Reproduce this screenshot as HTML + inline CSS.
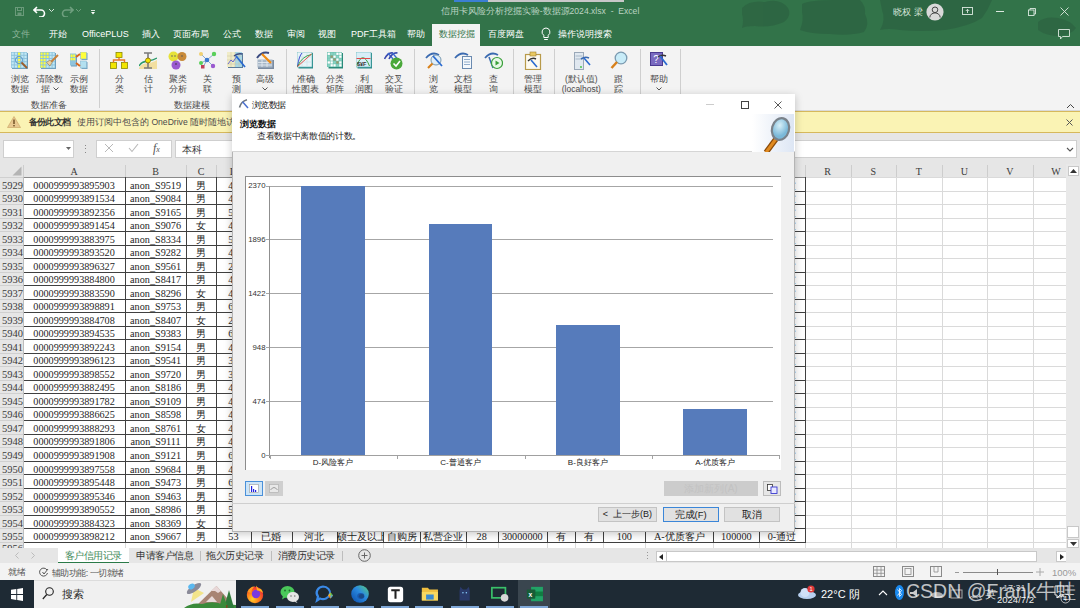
<!DOCTYPE html>
<html><head><meta charset="utf-8"><style>
html,body{margin:0;padding:0;width:1080px;height:608px;overflow:hidden;background:#fff;}
body{position:relative;font-family:"Liberation Sans",sans-serif;font-size:11px;color:#222;}
div{position:absolute;box-sizing:border-box;}
.t{white-space:nowrap;line-height:13px;}
.cell{white-space:nowrap;font-family:"Liberation Serif",serif;font-size:10.2px;line-height:13px;color:#1e1e1e;}
.sf{font-family:"Liberation Serif",serif;}
.rb{white-space:nowrap;font-size:8.5px;line-height:10px;color:#4a4a4a;text-align:center;}
.tab{white-space:nowrap;font-size:9px;line-height:13px;color:#fff;}
</style></head><body>

<div style="left:0px;top:0px;width:1080px;height:46px;background:#327349;"></div>
<svg style="position:absolute;left:720px;top:0px" width="360" height="46" viewBox="0 0 360 46"><g fill="#2d6442" opacity="0.8"><path d="M22 8 Q30 0 45 2 Q60 -2 68 8 Q72 16 64 22 Q50 28 35 26 Q25 26 22 28 Q24 20 22 14 Z"/><path d="M82 4 Q90 0 115 0 H140 Q146 6 145 14 Q150 24 144 32 Q130 36 110 34 Q90 34 80 30 Q84 20 82 12 Z"/><path d="M160 0 H272 Q268 10 262 18 Q250 26 225 30 Q200 32 180 30 Q168 28 160 30 Q166 20 162 10 Z"/><path d="M318 22 Q325 16 338 18 Q350 20 356 28 Q352 34 340 36 Q326 36 318 30 Z"/></g></svg>
<div style="left:454px;top:0px;width:34px;height:2px;background:#3b7fd3;"></div>
<div style="left:488px;top:0px;width:136px;height:2px;background:#c8c8c8;"></div>
<svg style="position:absolute;left:15px;top:7px" width="9" height="9" viewBox="0 0 9 9"><rect x="0.5" y="0.5" width="8" height="8" fill="none" stroke="#6a9a7a" stroke-width="1"/><rect x="2.5" y="0.5" width="4" height="3" fill="none" stroke="#6a9a7a"/><rect x="2.5" y="5.5" width="4" height="3" fill="#6a9a7a"/></svg>
<svg style="position:absolute;left:33px;top:5px" width="14" height="12" viewBox="0 0 14 12"><path d="M4 2 L1 5 L4 8 M1.5 5 H8 a3.5 3.5 0 0 1 0 7 H6" fill="none" stroke="#fff" stroke-width="1.6"/></svg>
<svg style="position:absolute;left:48px;top:8px" width="7" height="5" viewBox="0 0 7 5"><path d="M1 1 L3.5 3.5 L6 1" fill="none" stroke="#d8e6dc" stroke-width="1"/></svg>
<svg style="position:absolute;left:60px;top:5px" width="14" height="12" viewBox="0 0 14 12"><path d="M10 2 L13 5 L10 8 M12.5 5 H6 a3.5 3.5 0 0 0 0 7 H8" fill="none" stroke="#6f9f7f" stroke-width="1.6"/></svg>
<svg style="position:absolute;left:75px;top:8px" width="7" height="5" viewBox="0 0 7 5"><path d="M1 1 L3.5 3.5 L6 1" fill="none" stroke="#6f9f7f" stroke-width="1"/></svg>
<svg style="position:absolute;left:91px;top:10px" width="4" height="5" viewBox="0 0 4 5"><rect x="0" y="0" width="4" height="0.8" fill="#fff"/><path d="M0 2 H4 L2 4.5 Z" fill="#fff"/></svg>
<div class="t" style="left:340px;width:400px;top:5px;text-align:center;color:#bcd3c3;font-size:8.6px;">信用卡风险分析挖掘实验-数据源2024.xlsx&nbsp; - &nbsp;Excel</div>
<div class="t" style="left:893px;top:5.5px;color:#d5e4da;font-size:9px;">晓权 梁</div>
<svg style="position:absolute;left:926px;top:3px" width="18" height="18" viewBox="0 0 18 18"><circle cx="9" cy="9" r="8.6" fill="#d9d9d9"/><circle cx="9" cy="6.8" r="2.8" fill="none" stroke="#444" stroke-width="1"/><path d="M3.8 14.5 a5.2 4.6 0 0 1 10.4 0" fill="none" stroke="#444" stroke-width="1"/></svg>
<svg style="position:absolute;left:962px;top:7px" width="11" height="9" viewBox="0 0 11 9"><rect x="0.5" y="0.5" width="10" height="7" fill="none" stroke="#dce9e0" stroke-width="0.9"/><path d="M5.5 6 V2.5 M3.8 4 L5.5 2.3 L7.2 4" fill="none" stroke="#dce9e0" stroke-width="0.9"/></svg>
<div style="left:996px;top:11px;width:8px;height:0.9px;background:#dce9e0;"></div>
<svg style="position:absolute;left:1027.5px;top:7.5px" width="8" height="8" viewBox="0 0 8 8"><rect x="0.5" y="2" width="5.5" height="5.5" fill="none" stroke="#dce9e0" stroke-width="0.9"/><path d="M2 2 V0.5 H7.5 V6 H6" fill="none" stroke="#dce9e0" stroke-width="0.9"/></svg>
<svg style="position:absolute;left:1059.5px;top:7px" width="9" height="9" viewBox="0 0 9 9"><path d="M0.5 0.5 L8.5 8.5 M8.5 0.5 L0.5 8.5" stroke="#dce9e0" stroke-width="0.9"/></svg>
<svg style="position:absolute;left:1058px;top:29px" width="12" height="11" viewBox="0 0 12 11"><path d="M0.5 0.5 H11.5 V7.5 H4.5 L2.5 10 V7.5 H0.5 Z" fill="none" stroke="#dce9e0" stroke-width="0.9"/></svg>
<div class="tab" style="left:12px;top:28px;color:#8fb59b;">文件</div>
<div class="tab" style="left:49px;top:28px;color:#fff;">开始</div>
<div class="tab" style="left:82px;top:28px;color:#fff;">OfficePLUS</div>
<div class="tab" style="left:142px;top:28px;color:#fff;">插入</div>
<div class="tab" style="left:173px;top:28px;color:#fff;">页面布局</div>
<div class="tab" style="left:223px;top:28px;color:#fff;">公式</div>
<div class="tab" style="left:255px;top:28px;color:#fff;">数据</div>
<div class="tab" style="left:287px;top:28px;color:#fff;">审阅</div>
<div class="tab" style="left:318px;top:28px;color:#fff;">视图</div>
<div class="tab" style="left:351px;top:28px;color:#fff;">PDF工具箱</div>
<div class="tab" style="left:407px;top:28px;color:#fff;">帮助</div>
<div class="tab" style="left:488px;top:28px;color:#fff;">百度网盘</div>
<div class="tab" style="left:558px;top:28px;color:#fff;">操作说明搜索</div>
<div style="left:432px;top:24px;width:48px;height:22px;background:#f3f3f3;"></div>
<div class="tab" style="left:439px;top:28px;color:#327349;">数据挖掘</div>
<svg style="position:absolute;left:541px;top:27px" width="10" height="15" viewBox="0 0 10 15"><path d="M5 1 a4 4 0 0 0 -2.2 7.3 V10.5 H7.2 V8.3 A4 4 0 0 0 5 1 Z M3.2 12.5 H6.8" fill="none" stroke="#fff" stroke-width="1"/></svg>
<div style="left:0px;top:46px;width:1080px;height:65px;background:#f3f3f3;border-bottom:1px solid #d9d9d9;"></div>
<div style="left:98.5px;top:49px;width:1px;height:59px;background:#cfcfcf;"></div>
<div style="left:285.6px;top:49px;width:1px;height:59px;background:#cfcfcf;"></div>
<div style="left:413.5px;top:49px;width:1px;height:59px;background:#cfcfcf;"></div>
<div style="left:512.7px;top:49px;width:1px;height:59px;background:#cfcfcf;"></div>
<div style="left:553.7px;top:49px;width:1px;height:59px;background:#cfcfcf;"></div>
<div style="left:640px;top:49px;width:1px;height:59px;background:#cfcfcf;"></div>
<div style="left:679.6px;top:49px;width:1px;height:59px;background:#cfcfcf;"></div>
<svg style="position:absolute;left:11px;top:52px" width="18" height="18" viewBox="0 0 18 18"><rect x="1" y="1" width="16" height="16" fill="#6f9fbf"/><rect x="0" y="0" width="16" height="16" fill="#8fc3dc"/><rect x="0.60" y="0.60" width="2.20" height="2.20" fill="#c2e8f6"/><rect x="0.60" y="3.80" width="2.20" height="2.20" fill="#c2e8f6"/><rect x="0.60" y="7.00" width="2.20" height="2.20" fill="#c2e8f6"/><rect x="0.60" y="10.20" width="2.20" height="2.20" fill="#c2e8f6"/><rect x="0.60" y="13.40" width="2.20" height="2.20" fill="#c2e8f6"/><rect x="3.80" y="0.60" width="2.20" height="2.20" fill="#c2e8f6"/><rect x="3.80" y="3.80" width="2.20" height="2.20" fill="#c2e8f6"/><rect x="3.80" y="7.00" width="2.20" height="2.20" fill="#c2e8f6"/><rect x="3.80" y="10.20" width="2.20" height="2.20" fill="#c2e8f6"/><rect x="3.80" y="13.40" width="2.20" height="2.20" fill="#c2e8f6"/><rect x="7.00" y="0.60" width="2.20" height="2.20" fill="#ffff3a"/><rect x="7.00" y="3.80" width="2.20" height="2.20" fill="#ffff3a"/><rect x="7.00" y="7.00" width="2.20" height="2.20" fill="#ffff3a"/><rect x="7.00" y="10.20" width="2.20" height="2.20" fill="#ffff3a"/><rect x="7.00" y="13.40" width="2.20" height="2.20" fill="#ffff3a"/><rect x="10.20" y="0.60" width="2.20" height="2.20" fill="#c2e8f6"/><rect x="10.20" y="3.80" width="2.20" height="2.20" fill="#c2e8f6"/><rect x="10.20" y="7.00" width="2.20" height="2.20" fill="#c2e8f6"/><rect x="10.20" y="10.20" width="2.20" height="2.20" fill="#c2e8f6"/><rect x="10.20" y="13.40" width="2.20" height="2.20" fill="#c2e8f6"/><rect x="13.40" y="0.60" width="2.20" height="2.20" fill="#c2e8f6"/><rect x="13.40" y="3.80" width="2.20" height="2.20" fill="#c2e8f6"/><rect x="13.40" y="7.00" width="2.20" height="2.20" fill="#c2e8f6"/><rect x="13.40" y="10.20" width="2.20" height="2.20" fill="#c2e8f6"/><rect x="13.40" y="13.40" width="2.20" height="2.20" fill="#c2e8f6"/><circle cx="8" cy="8" r="3.6" fill="none" stroke="#4a8ac8" stroke-width="1" opacity="0.8"/><path d="M10.5 10.5 L16 16" stroke="#9a5a2a" stroke-width="1.8"/></svg>
<svg style="position:absolute;left:40px;top:52px" width="19" height="18" viewBox="0 0 19 18"><rect x="1" y="1" width="15" height="16" fill="#6f9fbf"/><rect x="0" y="0" width="15" height="16" fill="#8fc3dc"/><rect x="0.60" y="0.60" width="2.00" height="2.20" fill="#ffff3a"/><rect x="0.60" y="3.80" width="2.00" height="2.20" fill="#ffff3a"/><rect x="0.60" y="7.00" width="2.00" height="2.20" fill="#ffff3a"/><rect x="0.60" y="10.20" width="2.00" height="2.20" fill="#ffff3a"/><rect x="0.60" y="13.40" width="2.00" height="2.20" fill="#ffff3a"/><rect x="3.60" y="0.60" width="2.00" height="2.20" fill="#ffff3a"/><rect x="3.60" y="3.80" width="2.00" height="2.20" fill="#ffff3a"/><rect x="3.60" y="7.00" width="2.00" height="2.20" fill="#ffff3a"/><rect x="3.60" y="10.20" width="2.00" height="2.20" fill="#ffff3a"/><rect x="3.60" y="13.40" width="2.00" height="2.20" fill="#ffff3a"/><rect x="6.60" y="0.60" width="2.00" height="2.20" fill="#ffff3a"/><rect x="6.60" y="3.80" width="2.00" height="2.20" fill="#ffff3a"/><rect x="6.60" y="7.00" width="2.00" height="2.20" fill="#c2e8f6"/><rect x="6.60" y="10.20" width="2.00" height="2.20" fill="#c2e8f6"/><rect x="6.60" y="13.40" width="2.00" height="2.20" fill="#c2e8f6"/><rect x="9.60" y="0.60" width="2.00" height="2.20" fill="#c2e8f6"/><rect x="9.60" y="3.80" width="2.00" height="2.20" fill="#c2e8f6"/><rect x="9.60" y="7.00" width="2.00" height="2.20" fill="#c2e8f6"/><rect x="9.60" y="10.20" width="2.00" height="2.20" fill="#c2e8f6"/><rect x="9.60" y="13.40" width="2.00" height="2.20" fill="#c2e8f6"/><rect x="12.60" y="0.60" width="2.00" height="2.20" fill="#c2e8f6"/><rect x="12.60" y="3.80" width="2.00" height="2.20" fill="#c2e8f6"/><rect x="12.60" y="7.00" width="2.00" height="2.20" fill="#c2e8f6"/><rect x="12.60" y="10.20" width="2.00" height="2.20" fill="#c2e8f6"/><rect x="12.60" y="13.40" width="2.00" height="2.20" fill="#c2e8f6"/><path d="M11 10 L18 3" stroke="#c8803a" stroke-width="2"/><path d="M6.5 10.5 L10 8 L12 10.5 L10 14 Z" fill="#e8d0a0" stroke="#8a6a3a" stroke-width="0.5"/></svg>
<svg style="position:absolute;left:69px;top:52px" width="19" height="18" viewBox="0 0 19 18"><rect x="2" y="2.5" width="6" height="12" fill="#6f9fbf"/><rect x="1" y="1.5" width="6" height="12" fill="#8fc3dc"/><rect x="1.6" y="2.5" width="2" height="2.5" fill="#ffff3a"/><rect x="4.2" y="2.5" width="2" height="2.5" fill="#ffff3a"/><rect x="1.6" y="5.8" width="2" height="2.5" fill="#ffff3a"/><rect x="4.2" y="5.8" width="2" height="2.5" fill="#ffff3a"/><rect x="12.5" y="1" width="6" height="7" fill="#6f9fbf"/><rect x="11.5" y="0" width="6" height="7" fill="#ffff3a" stroke="#8ab8d0" stroke-width="0.6"/><rect x="12.5" y="10" width="6" height="7" fill="#6f9fbf"/><rect x="11.5" y="9" width="6" height="7" fill="#b3e0f0" stroke="#8ab8d0" stroke-width="0.6"/><path d="M7 5 L11 2 M7 11 L11 14" stroke="#d9671e" stroke-width="2"/></svg>
<svg style="position:absolute;left:110px;top:52px" width="18" height="17" viewBox="0 0 18 17"><rect x="6" y="0.5" width="6" height="5" fill="#f2e600" stroke="#8a8a00" stroke-width="0.8"/><rect x="0.5" y="10.5" width="6" height="6" fill="#f2e600" stroke="#8a8a00" stroke-width="0.8"/><rect x="11.5" y="10.5" width="6" height="6" fill="#f2e600" stroke="#8a8a00" stroke-width="0.8"/><path d="M9 5.5 V8 M3.5 10.5 V8 H14.5 V10.5" fill="none" stroke="#e8782a" stroke-width="1.4"/></svg>
<svg style="position:absolute;left:139px;top:52px" width="18" height="17" viewBox="0 0 18 17"><path d="M0 16 C4 9 10 13 18 8 V17 H0 Z" fill="#f2dfa0"/><path d="M0 14 C4 7 10 11 18 6" fill="none" stroke="#2a9a6a" stroke-width="1.4"/><path d="M5 1 H13 M9 1 V16 M5 16 H13" stroke="#7a7a7a" stroke-width="1.6"/><circle cx="9" cy="8.5" r="2.5" fill="#f2e600" stroke="#8a6a00" stroke-width="0.8"/></svg>
<svg style="position:absolute;left:168px;top:51px" width="19" height="19" viewBox="0 0 19 19"><circle cx="5.5" cy="5.5" r="5" fill="#e6e23a"/><circle cx="14" cy="5.5" r="4.5" fill="#c88a3a"/><circle cx="8" cy="14" r="4.5" fill="#9a5ad0"/><circle cx="4" cy="5" r="0.8" fill="#666"/><circle cx="7" cy="5" r="0.8" fill="#666"/><circle cx="14" cy="5" r="0.8" fill="#555"/><circle cx="8" cy="13" r="0.8" fill="#333"/></svg>
<svg style="position:absolute;left:198px;top:51px" width="19" height="19" viewBox="0 0 19 19"><path d="M3 3 L9 9 L16 3 M9 9 L3 12 M9 9 L15 15 M9 9 L5 16" fill="none" stroke="#7aa0c8" stroke-width="0.9"/><circle cx="3" cy="3" r="2" fill="#f0d070"/><circle cx="16" cy="3" r="2.2" fill="#5ad05a"/><circle cx="3" cy="12" r="2" fill="#5ad05a"/><circle cx="9" cy="9" r="2.3" fill="#3a7ad0"/><circle cx="15" cy="15" r="2.2" fill="#9a5ad0"/><rect x="3" y="14" width="3.5" height="3.5" fill="#c0405a"/></svg>
<svg style="position:absolute;left:227px;top:52px" width="19" height="17" viewBox="0 0 19 17"><rect x="1" y="1" width="15" height="15" fill="#5a7a9a"/><rect x="0" y="0" width="15" height="15" fill="#f0ecc8"/><rect x="8" y="0" width="7" height="15" fill="#a8d8e8"/><path d="M0 4 H15 M0 8 H15 M0 12 H15 M4 0 V15 M8 0 V15 M12 0 V15" stroke="#c8c0a0" stroke-width="0.5"/><path d="M1 12 L4 8 L6 10 L10 4" fill="none" stroke="#6a6ad0" stroke-width="1"/><path d="M7 4 Q11 1 15 2" fill="none" stroke="#3a4a80" stroke-width="1.4"/><path d="M9 4 L18 15" stroke="#2a6ad0" stroke-width="1.8"/></svg>
<svg style="position:absolute;left:256px;top:51px" width="19" height="19" viewBox="0 0 19 19"><rect x="2" y="9" width="16" height="9" fill="#7a8aa0"/><rect x="1.5" y="8.5" width="15" height="8" fill="#a8b8c8"/><path d="M2 11.5 H16 M2 14 H16 M6 9 V16 M11 9 V16" stroke="#e8eef4" stroke-width="0.8"/><path d="M1 7 Q6 0 13 2" fill="none" stroke="#3a4a80" stroke-width="2"/><path d="M6 3 L15 12" stroke="#f08a10" stroke-width="2.2"/></svg>
<svg style="position:absolute;left:297px;top:52px" width="17" height="17" viewBox="0 0 17 17"><path d="M1.5 1 H16 V16.5 H1.5 Z" fill="#2a8a8a"/><rect x="0" y="0" width="15" height="15" fill="#e8f4f8" stroke="#5ab0b0" stroke-width="0.6"/><path d="M0 5 H15 M0 10 H15 M5 0 V15 M10 0 V15" stroke="#c0dce4" stroke-width="0.5"/><path d="M0.5 14.5 Q2 4 5 1" fill="none" stroke="#3a4ad0" stroke-width="1"/><path d="M0.5 14.5 Q5 4 14.5 2.5" fill="none" stroke="#2a9a3a" stroke-width="0.9"/><path d="M0.5 14.5 L14.5 2" stroke="#e04a3a" stroke-width="0.9"/></svg>
<svg style="position:absolute;left:327px;top:52px" width="17" height="17" viewBox="0 0 17 17"><path d="M1.5 1 H16 V16.5 H1.5 Z" fill="#2a8a7a"/><rect x="0" y="0" width="15" height="15" fill="#6cc0b0"/><rect x="0.6" y="0.6" width="2.3" height="2.3" fill="#ffffff"/><rect x="3.5" y="0.6" width="2.3" height="2.3" fill="#8ad4c4"/><rect x="6.4" y="0.6" width="2.3" height="2.3" fill="#8ad4c4"/><rect x="9.3" y="0.6" width="2.3" height="2.3" fill="#ffffff"/><rect x="12.2" y="0.6" width="2.3" height="2.3" fill="#ffffff"/><rect x="0.6" y="3.5" width="2.3" height="2.3" fill="#8ad4c4"/><rect x="3.5" y="3.5" width="2.3" height="2.3" fill="#9a9a70"/><rect x="6.4" y="3.5" width="2.3" height="2.3" fill="#ffffff"/><rect x="9.3" y="3.5" width="2.3" height="2.3" fill="#8ad4c4"/><rect x="12.2" y="3.5" width="2.3" height="2.3" fill="#ffffff"/><rect x="0.6" y="6.4" width="2.3" height="2.3" fill="#8ad4c4"/><rect x="3.5" y="6.4" width="2.3" height="2.3" fill="#ffffff"/><rect x="6.4" y="6.4" width="2.3" height="2.3" fill="#9a9a70"/><rect x="9.3" y="6.4" width="2.3" height="2.3" fill="#ffffff"/><rect x="12.2" y="6.4" width="2.3" height="2.3" fill="#8ad4c4"/><rect x="0.6" y="9.3" width="2.3" height="2.3" fill="#ffffff"/><rect x="3.5" y="9.3" width="2.3" height="2.3" fill="#ffffff"/><rect x="6.4" y="9.3" width="2.3" height="2.3" fill="#8ad4c4"/><rect x="9.3" y="9.3" width="2.3" height="2.3" fill="#9a9a70"/><rect x="12.2" y="9.3" width="2.3" height="2.3" fill="#ffffff"/><rect x="0.6" y="12.2" width="2.3" height="2.3" fill="#8ad4c4"/><rect x="3.5" y="12.2" width="2.3" height="2.3" fill="#ffffff"/><rect x="6.4" y="12.2" width="2.3" height="2.3" fill="#ffffff"/><rect x="9.3" y="12.2" width="2.3" height="2.3" fill="#8ad4c4"/><rect x="12.2" y="12.2" width="2.3" height="2.3" fill="#ffffff"/></svg>
<svg style="position:absolute;left:356px;top:52px" width="17" height="17" viewBox="0 0 17 17"><path d="M1.5 1 H16 V16.5 H1.5 Z" fill="#2a8a8a"/><rect x="0" y="0" width="15" height="15" fill="#d8eef8" stroke="#5ab0b0" stroke-width="0.6"/><path d="M1 13 Q7 -2 13.5 14" fill="none" stroke="#3aa03a" stroke-width="1"/><path d="M0.5 6.5 H14.5" stroke="#e04a4a" stroke-width="1"/><text x="1" y="14" font-size="5.5" font-family="Liberation Sans" font-weight="bold" fill="#333">$¥F</text></svg>
<svg style="position:absolute;left:384px;top:51px" width="19" height="19" viewBox="0 0 19 19"><path d="M0.5 8 Q4 1 9 2" fill="none" stroke="#3a4ab0" stroke-width="1.6"/><path d="M4 2 L9 8" stroke="#3a6ad0" stroke-width="1.3"/><path d="M5 8 Q8.5 1 13.5 2" fill="none" stroke="#3a4ab0" stroke-width="1.6"/><path d="M8.5 2 L13.5 8" stroke="#3a6ad0" stroke-width="1.3"/><circle cx="12.5" cy="12.5" r="6" fill="#4aa83a"/><path d="M9.5 12.5 L12 15 L16 10" fill="none" stroke="#fff" stroke-width="1.6"/></svg>
<svg style="position:absolute;left:425px;top:51px" width="19" height="19" viewBox="0 0 19 19"><path d="M1 7 Q7 0 14 4" fill="none" stroke="#3a6ab0" stroke-width="1.8"/><circle cx="11" cy="9" r="5" fill="#e0eef8" stroke="#7a9ab0" stroke-width="1"/><path d="M7.5 12.5 L3 17" stroke="#d8801a" stroke-width="2.2"/><path d="M8 5 L17 15" stroke="#2a6ad0" stroke-width="1.8"/></svg>
<svg style="position:absolute;left:454px;top:51px" width="19" height="19" viewBox="0 0 19 19"><path d="M1 7 Q7 0 14 4" fill="none" stroke="#3a6ab0" stroke-width="1.8"/><rect x="8.5" y="5.5" width="9" height="12" fill="#f4f8fc" stroke="#6a8ab0"/><path d="M10 8.5 H16 M10 11 H16 M10 13.5 H16" stroke="#7a9ac0" stroke-width="0.8"/></svg>
<svg style="position:absolute;left:484px;top:51px" width="19" height="19" viewBox="0 0 19 19"><path d="M1 7 Q7 0 14 4" fill="none" stroke="#3a6ab0" stroke-width="1.8"/><path d="M5 6 L9 17" stroke="#3a6ab0" stroke-width="1.5"/><circle cx="13" cy="12" r="5.5" fill="#e8f8e8" stroke="#3aa03a" stroke-width="1.2"/><path d="M11.5 9.5 L15.5 12 L11.5 14.5 Z" fill="#3aa03a"/></svg>
<svg style="position:absolute;left:524px;top:51px" width="18" height="19" viewBox="0 0 18 19"><rect x="1.5" y="3.5" width="15" height="15" fill="#fdfaf0" stroke="#b89a4a" stroke-width="1.2"/><rect x="6" y="1" width="6" height="4" fill="#e8c860" stroke="#a08030" stroke-width="0.6"/><path d="M4 10 Q8 6 12 8" fill="none" stroke="#333" stroke-width="1.4"/><path d="M7 9 L13 16" stroke="#2a6ad0" stroke-width="1.6"/></svg>
<svg style="position:absolute;left:573px;top:51px" width="18" height="20" viewBox="0 0 18 20"><rect x="1.5" y="1.5" width="9" height="17" fill="#e0e8f0" stroke="#9aa8b8"/><path d="M2.5 5 H9.5 M2.5 8 H9.5" stroke="#a8b8c8"/><circle cx="8" cy="16" r="0.9" fill="#3ac03a"/><path d="M8 8 Q12 5 16 7" fill="none" stroke="#3a6ab0" stroke-width="1.6"/><path d="M11 7 L17 14" stroke="#2a6ad0" stroke-width="1.6"/></svg>
<svg style="position:absolute;left:610px;top:51px" width="18" height="19" viewBox="0 0 18 19"><circle cx="11" cy="7" r="5.8" fill="#c8ecf8" stroke="#7a9ab0" stroke-width="1.3"/><path d="M7 11 L1.5 17" stroke="#d8801a" stroke-width="2.5"/></svg>
<svg style="position:absolute;left:650px;top:51px" width="19" height="19" viewBox="0 0 19 19"><rect x="0.5" y="1.5" width="12" height="13" fill="#7a6ac0" stroke="#4a3a90"/><text x="3.2" y="11.5" font-size="10" fill="#fff" font-family="Liberation Sans">?</text><path d="M8 6 Q12 3 16 5" fill="none" stroke="#333" stroke-width="1.4"/><path d="M10 5 L17 14" stroke="#2a6ad0" stroke-width="1.8"/></svg>
<div class="rb" style="left:-10px;width:60px;top:74px;text-align:center;">浏览</div>
<div class="rb" style="left:-10px;width:60px;top:84px;text-align:center;">数据</div>
<div class="rb" style="left:19px;width:60px;top:74px;text-align:center;">清除数</div>
<div class="rb" style="left:19px;width:60px;top:84px;text-align:center;">据&nbsp;&nbsp;&nbsp;</div>
<div class="rb" style="left:49px;width:60px;top:74px;text-align:center;">示例</div>
<div class="rb" style="left:49px;width:60px;top:84px;text-align:center;">数据</div>
<div class="rb" style="left:89px;width:60px;top:74px;text-align:center;">分</div>
<div class="rb" style="left:89px;width:60px;top:84px;text-align:center;">类</div>
<div class="rb" style="left:118px;width:60px;top:74px;text-align:center;">估</div>
<div class="rb" style="left:118px;width:60px;top:84px;text-align:center;">计</div>
<div class="rb" style="left:147.5px;width:60px;top:74px;text-align:center;">聚类</div>
<div class="rb" style="left:147.5px;width:60px;top:84px;text-align:center;">分析</div>
<div class="rb" style="left:177px;width:60px;top:74px;text-align:center;">关</div>
<div class="rb" style="left:177px;width:60px;top:84px;text-align:center;">联</div>
<div class="rb" style="left:206px;width:60px;top:74px;text-align:center;">预</div>
<div class="rb" style="left:206px;width:60px;top:84px;text-align:center;">测</div>
<div class="rb" style="left:235px;width:60px;top:74px;text-align:center;">高级</div>
<div class="rb" style="left:235px;width:60px;top:84px;text-align:center;"></div>
<div class="rb" style="left:275.5px;width:60px;top:74px;text-align:center;">准确</div>
<div class="rb" style="left:275.5px;width:60px;top:84px;text-align:center;">性图表</div>
<div class="rb" style="left:305px;width:60px;top:74px;text-align:center;">分类</div>
<div class="rb" style="left:305px;width:60px;top:84px;text-align:center;">矩阵</div>
<div class="rb" style="left:334px;width:60px;top:74px;text-align:center;">利</div>
<div class="rb" style="left:334px;width:60px;top:84px;text-align:center;">润图</div>
<div class="rb" style="left:363.6px;width:60px;top:74px;text-align:center;">交叉</div>
<div class="rb" style="left:363.6px;width:60px;top:84px;text-align:center;">验证</div>
<div class="rb" style="left:403.7px;width:60px;top:74px;text-align:center;">浏</div>
<div class="rb" style="left:403.7px;width:60px;top:84px;text-align:center;">览</div>
<div class="rb" style="left:433px;width:60px;top:74px;text-align:center;">文档</div>
<div class="rb" style="left:433px;width:60px;top:84px;text-align:center;">模型</div>
<div class="rb" style="left:463px;width:60px;top:74px;text-align:center;">查</div>
<div class="rb" style="left:463px;width:60px;top:84px;text-align:center;">询</div>
<div class="rb" style="left:503px;width:60px;top:74px;text-align:center;">管理</div>
<div class="rb" style="left:503px;width:60px;top:84px;text-align:center;">模型</div>
<div class="rb" style="left:551.3px;width:60px;top:74px;text-align:center;">(默认值)</div>
<div class="rb" style="left:551.3px;width:60px;top:84px;text-align:center;">(localhost)</div>
<div class="rb" style="left:588.8px;width:60px;top:74px;text-align:center;">跟</div>
<div class="rb" style="left:588.8px;width:60px;top:84px;text-align:center;">踪</div>
<div class="rb" style="left:629.3px;width:60px;top:74px;text-align:center;">帮助</div>
<div class="rb" style="left:629.3px;width:60px;top:84px;text-align:center;"></div>
<div class="rb" style="left:19px;width:60px;top:99.5px;text-align:center;">数据准备</div>
<svg style="position:absolute;left:52.5px;top:87px" width="6" height="4" viewBox="0 0 6 4"><path d="M0.5 0.5 L3 3 L5.5 0.5" fill="none" stroke="#444" stroke-width="0.9"/></svg>
<svg style="position:absolute;left:262px;top:87px" width="6" height="4" viewBox="0 0 6 4"><path d="M0.5 0.5 L3 3 L5.5 0.5" fill="none" stroke="#444" stroke-width="0.9"/></svg>
<svg style="position:absolute;left:656.3px;top:87px" width="6" height="4" viewBox="0 0 6 4"><path d="M0.5 0.5 L3 3 L5.5 0.5" fill="none" stroke="#444" stroke-width="0.9"/></svg>
<div class="rb" style="left:161.5px;width:60px;top:99.5px;text-align:center;">数据建模</div>
<div style="left:0px;top:110.5px;width:1080px;height:22px;background:#faf3b4;border-top:1px solid #d6b85c;border-bottom:1px solid #d6b85c;"></div>
<svg style="position:absolute;left:7px;top:115.5px" width="14" height="12" viewBox="0 0 14 12"><path d="M7 0.5 L13.5 11.5 H0.5 Z" fill="#e8c890" stroke="#c8a060" stroke-width="0.6"/><rect x="6.3" y="3.5" width="1.4" height="4.5" fill="#6a4a20"/><rect x="6.3" y="9" width="1.4" height="1.4" fill="#6a4a20"/></svg>
<div class="t" style="left:28.5px;top:116px;color:#333;font-size:8.5px;letter-spacing:-0.6px;"><b>备份此文档</b></div>
<div class="t" style="left:77px;top:116px;color:#4a4a4a;font-size:8.6px;">使用订阅中包含的 OneDrive 随时随地访问</div>
<svg style="position:absolute;left:1065.5px;top:118.5px" width="7" height="7" viewBox="0 0 7 7"><path d="M0.5 0.5 L6.5 6.5 M6.5 0.5 L0.5 6.5" stroke="#555" stroke-width="1"/></svg>
<svg style="position:absolute;left:1066px;top:103px" width="9" height="6" viewBox="0 0 9 6"><path d="M1 5 L4.5 1.5 L8 5" fill="none" stroke="#444" stroke-width="1"/></svg>
<div style="left:0px;top:133px;width:1080px;height:31px;background:#e6e6e6;"></div>
<div style="left:3px;top:140px;width:71px;height:17.5px;background:#fff;border:1px solid #cfcfcf;"></div>
<svg style="position:absolute;left:66px;top:147px" width="5" height="3" viewBox="0 0 5 3"><path d="M0 0 H5 L2.5 3 Z" fill="#666"/></svg>
<div style="left:84.5px;top:144.5px;width:1.2px;height:1.2px;background:#888;"></div>
<div style="left:84.5px;top:148px;width:1.2px;height:1.2px;background:#888;"></div>
<div style="left:84.5px;top:151.5px;width:1.2px;height:1.2px;background:#888;"></div>
<div style="left:96px;top:140px;width:76px;height:17.5px;background:#fff;border:1px solid #cfcfcf;"></div>
<svg style="position:absolute;left:104px;top:143px" width="10" height="10" viewBox="0 0 10 10"><path d="M1 1 L9 9 M9 1 L1 9" stroke="#b8b8b8" stroke-width="1"/></svg>
<svg style="position:absolute;left:128px;top:143px" width="11" height="10" viewBox="0 0 11 10"><path d="M1 5 L4 8.5 L10 1" fill="none" stroke="#b8b8b8" stroke-width="1.1"/></svg>
<div class="t sf" style="left:153px;top:141.5px;color:#555;font-size:12px;"><i>f<span style="font-size:8px">x</span></i></div>
<div style="left:175px;top:140px;width:902px;height:17.5px;background:#fff;border:1px solid #cfcfcf;"></div>
<div class="t" style="left:182px;top:142.5px;color:#333;font-size:10px;">本科</div>
<svg style="position:absolute;left:1066px;top:147px" width="8" height="5" viewBox="0 0 8 5"><path d="M1 1 L4 4 L7 1" fill="none" stroke="#555" stroke-width="1.1"/></svg>
<div style="left:0px;top:164px;width:1066px;height:13.5px;background:#e6e6e6;"></div>
<div style="left:0px;top:177px;width:1066px;height:1px;background:#a8a8a8;"></div>
<svg style="position:absolute;left:12px;top:166px" width="10" height="10" viewBox="0 0 10 10"><path d="M9.5 0.5 V9.5 H0.5 Z" fill="#b4b4b4"/></svg>
<div style="left:23.05px;top:165px;width:1px;height:12.5px;background:#cdcdcd;"></div>
<div class="t sf" style="left:54.05px;width:40px;top:164.5px;text-align:center;font-size:10px;color:#3a3a3a;">A</div>
<div style="left:125.05px;top:165px;width:1px;height:12.5px;background:#cdcdcd;"></div>
<div class="t sf" style="left:135.55px;width:40px;top:164.5px;text-align:center;font-size:10px;color:#3a3a3a;">B</div>
<div style="left:186.05px;top:165px;width:1px;height:12.5px;background:#cdcdcd;"></div>
<div class="t sf" style="left:181.05px;width:40px;top:164.5px;text-align:center;font-size:10px;color:#3a3a3a;">C</div>
<div style="left:216.05px;top:165px;width:1px;height:12.5px;background:#cdcdcd;"></div>
<div class="t sf" style="left:213.45px;width:40px;top:164.5px;text-align:center;font-size:10px;color:#3a3a3a;">D</div>
<div style="left:250.85px;top:165px;width:1px;height:12.5px;background:#cdcdcd;"></div>
<div class="t sf" style="left:251.3px;width:40px;top:164.5px;text-align:center;font-size:10px;color:#3a3a3a;">E</div>
<div style="left:291.75px;top:165px;width:1px;height:12.5px;background:#cdcdcd;"></div>
<div class="t sf" style="left:294.3px;width:40px;top:164.5px;text-align:center;font-size:10px;color:#3a3a3a;">F</div>
<div style="left:336.85px;top:165px;width:1px;height:12.5px;background:#cdcdcd;"></div>
<div class="t sf" style="left:339.95px;width:40px;top:164.5px;text-align:center;font-size:10px;color:#3a3a3a;">G</div>
<div style="left:383.05px;top:165px;width:1px;height:12.5px;background:#cdcdcd;"></div>
<div class="t sf" style="left:381.55px;width:40px;top:164.5px;text-align:center;font-size:10px;color:#3a3a3a;">H</div>
<div style="left:420.05px;top:165px;width:1px;height:12.5px;background:#cdcdcd;"></div>
<div class="t sf" style="left:422.85px;width:40px;top:164.5px;text-align:center;font-size:10px;color:#3a3a3a;">I</div>
<div style="left:465.65px;top:165px;width:1px;height:12.5px;background:#cdcdcd;"></div>
<div class="t sf" style="left:461.65px;width:40px;top:164.5px;text-align:center;font-size:10px;color:#3a3a3a;">J</div>
<div style="left:497.65px;top:165px;width:1px;height:12.5px;background:#cdcdcd;"></div>
<div class="t sf" style="left:502.3px;width:40px;top:164.5px;text-align:center;font-size:10px;color:#3a3a3a;">K</div>
<div style="left:546.95px;top:165px;width:1px;height:12.5px;background:#cdcdcd;"></div>
<div class="t sf" style="left:541.05px;width:40px;top:164.5px;text-align:center;font-size:10px;color:#3a3a3a;">L</div>
<div style="left:575.15px;top:165px;width:1px;height:12.5px;background:#cdcdcd;"></div>
<div class="t sf" style="left:569.2px;width:40px;top:164.5px;text-align:center;font-size:10px;color:#3a3a3a;">M</div>
<div style="left:603.25px;top:165px;width:1px;height:12.5px;background:#cdcdcd;"></div>
<div class="t sf" style="left:604.3px;width:40px;top:164.5px;text-align:center;font-size:10px;color:#3a3a3a;">N</div>
<div style="left:645.35px;top:165px;width:1px;height:12.5px;background:#cdcdcd;"></div>
<div class="t sf" style="left:659.4px;width:40px;top:164.5px;text-align:center;font-size:10px;color:#3a3a3a;">O</div>
<div style="left:713.45px;top:165px;width:1px;height:12.5px;background:#cdcdcd;"></div>
<div class="t sf" style="left:716.3px;width:40px;top:164.5px;text-align:center;font-size:10px;color:#3a3a3a;">P</div>
<div style="left:759.15px;top:165px;width:1px;height:12.5px;background:#cdcdcd;"></div>
<div class="t sf" style="left:761.95px;width:40px;top:164.5px;text-align:center;font-size:10px;color:#3a3a3a;">Q</div>
<div style="left:804.75px;top:165px;width:1px;height:12.5px;background:#cdcdcd;"></div>
<div class="t sf" style="left:807.65px;width:40px;top:164.5px;text-align:center;font-size:10px;color:#3a3a3a;">R</div>
<div style="left:850.55px;top:165px;width:1px;height:12.5px;background:#cdcdcd;"></div>
<div class="t sf" style="left:853.3px;width:40px;top:164.5px;text-align:center;font-size:10px;color:#3a3a3a;">S</div>
<div style="left:896.05px;top:165px;width:1px;height:12.5px;background:#cdcdcd;"></div>
<div class="t sf" style="left:898.8px;width:40px;top:164.5px;text-align:center;font-size:10px;color:#3a3a3a;">T</div>
<div style="left:941.55px;top:165px;width:1px;height:12.5px;background:#cdcdcd;"></div>
<div class="t sf" style="left:944.3px;width:40px;top:164.5px;text-align:center;font-size:10px;color:#3a3a3a;">U</div>
<div style="left:987.05px;top:165px;width:1px;height:12.5px;background:#cdcdcd;"></div>
<div class="t sf" style="left:989.8px;width:40px;top:164.5px;text-align:center;font-size:10px;color:#3a3a3a;">V</div>
<div style="left:1032.55px;top:165px;width:1px;height:12.5px;background:#cdcdcd;"></div>
<div class="t sf" style="left:1036px;width:40px;top:164.5px;text-align:center;font-size:10px;color:#3a3a3a;">W</div>
<div style="left:0px;top:177.6px;width:1066px;height:370.9px;background:#fff;"></div>
<div style="left:0px;top:177.6px;width:23.5px;height:370.9px;background:#e6e6e6;"></div>
<div style="left:23px;top:177.1px;width:1px;height:370.9px;background:#bdbdbd;"></div>
<div style="left:24px;top:177.1px;width:1042px;height:1px;background:#dadada;"></div>
<div style="left:0px;top:177.1px;width:23px;height:1px;background:#d0d0d0;"></div>
<div style="left:24px;top:190.61px;width:1042px;height:1px;background:#dadada;"></div>
<div style="left:0px;top:190.61px;width:23px;height:1px;background:#d0d0d0;"></div>
<div style="left:24px;top:204.12px;width:1042px;height:1px;background:#dadada;"></div>
<div style="left:0px;top:204.12px;width:23px;height:1px;background:#d0d0d0;"></div>
<div style="left:24px;top:217.63px;width:1042px;height:1px;background:#dadada;"></div>
<div style="left:0px;top:217.63px;width:23px;height:1px;background:#d0d0d0;"></div>
<div style="left:24px;top:231.14px;width:1042px;height:1px;background:#dadada;"></div>
<div style="left:0px;top:231.14px;width:23px;height:1px;background:#d0d0d0;"></div>
<div style="left:24px;top:244.65px;width:1042px;height:1px;background:#dadada;"></div>
<div style="left:0px;top:244.65px;width:23px;height:1px;background:#d0d0d0;"></div>
<div style="left:24px;top:258.16px;width:1042px;height:1px;background:#dadada;"></div>
<div style="left:0px;top:258.16px;width:23px;height:1px;background:#d0d0d0;"></div>
<div style="left:24px;top:271.67px;width:1042px;height:1px;background:#dadada;"></div>
<div style="left:0px;top:271.67px;width:23px;height:1px;background:#d0d0d0;"></div>
<div style="left:24px;top:285.18px;width:1042px;height:1px;background:#dadada;"></div>
<div style="left:0px;top:285.18px;width:23px;height:1px;background:#d0d0d0;"></div>
<div style="left:24px;top:298.69px;width:1042px;height:1px;background:#dadada;"></div>
<div style="left:0px;top:298.69px;width:23px;height:1px;background:#d0d0d0;"></div>
<div style="left:24px;top:312.2px;width:1042px;height:1px;background:#dadada;"></div>
<div style="left:0px;top:312.2px;width:23px;height:1px;background:#d0d0d0;"></div>
<div style="left:24px;top:325.71px;width:1042px;height:1px;background:#dadada;"></div>
<div style="left:0px;top:325.71px;width:23px;height:1px;background:#d0d0d0;"></div>
<div style="left:24px;top:339.22px;width:1042px;height:1px;background:#dadada;"></div>
<div style="left:0px;top:339.22px;width:23px;height:1px;background:#d0d0d0;"></div>
<div style="left:24px;top:352.73px;width:1042px;height:1px;background:#dadada;"></div>
<div style="left:0px;top:352.73px;width:23px;height:1px;background:#d0d0d0;"></div>
<div style="left:24px;top:366.24px;width:1042px;height:1px;background:#dadada;"></div>
<div style="left:0px;top:366.24px;width:23px;height:1px;background:#d0d0d0;"></div>
<div style="left:24px;top:379.75px;width:1042px;height:1px;background:#dadada;"></div>
<div style="left:0px;top:379.75px;width:23px;height:1px;background:#d0d0d0;"></div>
<div style="left:24px;top:393.26px;width:1042px;height:1px;background:#dadada;"></div>
<div style="left:0px;top:393.26px;width:23px;height:1px;background:#d0d0d0;"></div>
<div style="left:24px;top:406.77px;width:1042px;height:1px;background:#dadada;"></div>
<div style="left:0px;top:406.77px;width:23px;height:1px;background:#d0d0d0;"></div>
<div style="left:24px;top:420.28px;width:1042px;height:1px;background:#dadada;"></div>
<div style="left:0px;top:420.28px;width:23px;height:1px;background:#d0d0d0;"></div>
<div style="left:24px;top:433.79px;width:1042px;height:1px;background:#dadada;"></div>
<div style="left:0px;top:433.79px;width:23px;height:1px;background:#d0d0d0;"></div>
<div style="left:24px;top:447.3px;width:1042px;height:1px;background:#dadada;"></div>
<div style="left:0px;top:447.3px;width:23px;height:1px;background:#d0d0d0;"></div>
<div style="left:24px;top:460.81px;width:1042px;height:1px;background:#dadada;"></div>
<div style="left:0px;top:460.81px;width:23px;height:1px;background:#d0d0d0;"></div>
<div style="left:24px;top:474.32px;width:1042px;height:1px;background:#dadada;"></div>
<div style="left:0px;top:474.32px;width:23px;height:1px;background:#d0d0d0;"></div>
<div style="left:24px;top:487.83px;width:1042px;height:1px;background:#dadada;"></div>
<div style="left:0px;top:487.83px;width:23px;height:1px;background:#d0d0d0;"></div>
<div style="left:24px;top:501.34px;width:1042px;height:1px;background:#dadada;"></div>
<div style="left:0px;top:501.34px;width:23px;height:1px;background:#d0d0d0;"></div>
<div style="left:24px;top:514.85px;width:1042px;height:1px;background:#dadada;"></div>
<div style="left:0px;top:514.85px;width:23px;height:1px;background:#d0d0d0;"></div>
<div style="left:24px;top:528.36px;width:1042px;height:1px;background:#dadada;"></div>
<div style="left:0px;top:528.36px;width:23px;height:1px;background:#d0d0d0;"></div>
<div style="left:24px;top:541.87px;width:1042px;height:1px;background:#dadada;"></div>
<div style="left:0px;top:541.87px;width:23px;height:1px;background:#d0d0d0;"></div>
<div style="left:24px;top:555.38px;width:1042px;height:1px;background:#dadada;"></div>
<div style="left:0px;top:555.38px;width:23px;height:1px;background:#d0d0d0;"></div>
<div style="left:125.05px;top:177.1px;width:1px;height:370.9px;background:#dadada;"></div>
<div style="left:186.05px;top:177.1px;width:1px;height:370.9px;background:#dadada;"></div>
<div style="left:216.05px;top:177.1px;width:1px;height:370.9px;background:#dadada;"></div>
<div style="left:250.85px;top:177.1px;width:1px;height:370.9px;background:#dadada;"></div>
<div style="left:291.75px;top:177.1px;width:1px;height:370.9px;background:#dadada;"></div>
<div style="left:336.85px;top:177.1px;width:1px;height:370.9px;background:#dadada;"></div>
<div style="left:383.05px;top:177.1px;width:1px;height:370.9px;background:#dadada;"></div>
<div style="left:420.05px;top:177.1px;width:1px;height:370.9px;background:#dadada;"></div>
<div style="left:465.65px;top:177.1px;width:1px;height:370.9px;background:#dadada;"></div>
<div style="left:497.65px;top:177.1px;width:1px;height:370.9px;background:#dadada;"></div>
<div style="left:546.95px;top:177.1px;width:1px;height:370.9px;background:#dadada;"></div>
<div style="left:575.15px;top:177.1px;width:1px;height:370.9px;background:#dadada;"></div>
<div style="left:603.25px;top:177.1px;width:1px;height:370.9px;background:#dadada;"></div>
<div style="left:645.35px;top:177.1px;width:1px;height:370.9px;background:#dadada;"></div>
<div style="left:713.45px;top:177.1px;width:1px;height:370.9px;background:#dadada;"></div>
<div style="left:759.15px;top:177.1px;width:1px;height:370.9px;background:#dadada;"></div>
<div style="left:804.75px;top:177.1px;width:1px;height:370.9px;background:#dadada;"></div>
<div style="left:850.55px;top:177.1px;width:1px;height:370.9px;background:#dadada;"></div>
<div style="left:896.05px;top:177.1px;width:1px;height:370.9px;background:#dadada;"></div>
<div style="left:941.55px;top:177.1px;width:1px;height:370.9px;background:#dadada;"></div>
<div style="left:987.05px;top:177.1px;width:1px;height:370.9px;background:#dadada;"></div>
<div style="left:1032.55px;top:177.1px;width:1px;height:370.9px;background:#dadada;"></div>
<div style="left:24px;top:177.1px;width:782.2px;height:1px;background:#8a8a8a;"></div>
<div style="left:24px;top:190.61px;width:782.2px;height:1px;background:#404040;"></div>
<div style="left:24px;top:204.12px;width:782.2px;height:1px;background:#404040;"></div>
<div style="left:24px;top:217.63px;width:782.2px;height:1px;background:#404040;"></div>
<div style="left:24px;top:231.14px;width:782.2px;height:1px;background:#404040;"></div>
<div style="left:24px;top:244.65px;width:782.2px;height:1px;background:#404040;"></div>
<div style="left:24px;top:258.16px;width:782.2px;height:1px;background:#404040;"></div>
<div style="left:24px;top:271.67px;width:782.2px;height:1px;background:#404040;"></div>
<div style="left:24px;top:285.18px;width:782.2px;height:1px;background:#404040;"></div>
<div style="left:24px;top:298.69px;width:782.2px;height:1px;background:#404040;"></div>
<div style="left:24px;top:312.2px;width:782.2px;height:1px;background:#404040;"></div>
<div style="left:24px;top:325.71px;width:782.2px;height:1px;background:#404040;"></div>
<div style="left:24px;top:339.22px;width:782.2px;height:1px;background:#404040;"></div>
<div style="left:24px;top:352.73px;width:782.2px;height:1px;background:#404040;"></div>
<div style="left:24px;top:366.24px;width:782.2px;height:1px;background:#404040;"></div>
<div style="left:24px;top:379.75px;width:782.2px;height:1px;background:#404040;"></div>
<div style="left:24px;top:393.26px;width:782.2px;height:1px;background:#404040;"></div>
<div style="left:24px;top:406.77px;width:782.2px;height:1px;background:#404040;"></div>
<div style="left:24px;top:420.28px;width:782.2px;height:1px;background:#404040;"></div>
<div style="left:24px;top:433.79px;width:782.2px;height:1px;background:#404040;"></div>
<div style="left:24px;top:447.3px;width:782.2px;height:1px;background:#404040;"></div>
<div style="left:24px;top:460.81px;width:782.2px;height:1px;background:#404040;"></div>
<div style="left:24px;top:474.32px;width:782.2px;height:1px;background:#404040;"></div>
<div style="left:24px;top:487.83px;width:782.2px;height:1px;background:#404040;"></div>
<div style="left:24px;top:501.34px;width:782.2px;height:1px;background:#404040;"></div>
<div style="left:24px;top:514.85px;width:782.2px;height:1px;background:#404040;"></div>
<div style="left:24px;top:528.36px;width:782.2px;height:1px;background:#404040;"></div>
<div style="left:24px;top:541.87px;width:782.2px;height:1px;background:#404040;"></div>
<div style="left:125.05px;top:177.1px;width:1px;height:365.77px;background:#404040;"></div>
<div style="left:186.05px;top:177.1px;width:1px;height:365.77px;background:#404040;"></div>
<div style="left:216.05px;top:177.1px;width:1px;height:365.77px;background:#404040;"></div>
<div style="left:250.85px;top:177.1px;width:1px;height:365.77px;background:#404040;"></div>
<div style="left:291.75px;top:177.1px;width:1px;height:365.77px;background:#404040;"></div>
<div style="left:336.85px;top:177.1px;width:1px;height:365.77px;background:#404040;"></div>
<div style="left:383.05px;top:177.1px;width:1px;height:365.77px;background:#404040;"></div>
<div style="left:420.05px;top:177.1px;width:1px;height:365.77px;background:#404040;"></div>
<div style="left:465.65px;top:177.1px;width:1px;height:365.77px;background:#404040;"></div>
<div style="left:497.65px;top:177.1px;width:1px;height:365.77px;background:#404040;"></div>
<div style="left:546.95px;top:177.1px;width:1px;height:365.77px;background:#404040;"></div>
<div style="left:575.15px;top:177.1px;width:1px;height:365.77px;background:#404040;"></div>
<div style="left:603.25px;top:177.1px;width:1px;height:365.77px;background:#404040;"></div>
<div style="left:645.35px;top:177.1px;width:1px;height:365.77px;background:#404040;"></div>
<div style="left:713.45px;top:177.1px;width:1px;height:365.77px;background:#404040;"></div>
<div style="left:759.15px;top:177.1px;width:1px;height:365.77px;background:#404040;"></div>
<div style="left:804.75px;top:177.1px;width:1px;height:365.77px;background:#404040;"></div>
<div class="cell" style="left:2px;top:178.8px;font-size:10.5px;color:#3a3a3a;">5929</div>
<div class="cell" style="left:24.05px;width:100px;top:178.8px;text-align:center;">0000999993895903</div>
<div class="cell" style="left:125.55px;width:60px;top:178.8px;text-align:center;">anon_S9519</div>
<div class="cell" style="left:186.05px;width:30px;top:178.8px;text-align:center;">男</div>
<div class="cell" style="left:218.45px;width:30px;top:178.8px;text-align:center;">45</div>
<div class="cell" style="left:758.95px;width:46px;top:178.8px;text-align:center;">0-通过</div>
<div class="cell" style="left:2px;top:192.31px;font-size:10.5px;color:#3a3a3a;">5930</div>
<div class="cell" style="left:24.05px;width:100px;top:192.31px;text-align:center;">0000999993891534</div>
<div class="cell" style="left:125.55px;width:60px;top:192.31px;text-align:center;">anon_S9084</div>
<div class="cell" style="left:186.05px;width:30px;top:192.31px;text-align:center;">男</div>
<div class="cell" style="left:218.45px;width:30px;top:192.31px;text-align:center;">45</div>
<div class="cell" style="left:758.95px;width:46px;top:192.31px;text-align:center;">0-通过</div>
<div class="cell" style="left:2px;top:205.82px;font-size:10.5px;color:#3a3a3a;">5931</div>
<div class="cell" style="left:24.05px;width:100px;top:205.82px;text-align:center;">0000999993892356</div>
<div class="cell" style="left:125.55px;width:60px;top:205.82px;text-align:center;">anon_S9165</div>
<div class="cell" style="left:186.05px;width:30px;top:205.82px;text-align:center;">男</div>
<div class="cell" style="left:218.45px;width:30px;top:205.82px;text-align:center;">55</div>
<div class="cell" style="left:758.95px;width:46px;top:205.82px;text-align:center;">0-通过</div>
<div class="cell" style="left:2px;top:219.33px;font-size:10.5px;color:#3a3a3a;">5932</div>
<div class="cell" style="left:24.05px;width:100px;top:219.33px;text-align:center;">0000999993891454</div>
<div class="cell" style="left:125.55px;width:60px;top:219.33px;text-align:center;">anon_S9076</div>
<div class="cell" style="left:186.05px;width:30px;top:219.33px;text-align:center;">女</div>
<div class="cell" style="left:218.45px;width:30px;top:219.33px;text-align:center;">45</div>
<div class="cell" style="left:758.95px;width:46px;top:219.33px;text-align:center;">0-通过</div>
<div class="cell" style="left:2px;top:232.84px;font-size:10.5px;color:#3a3a3a;">5933</div>
<div class="cell" style="left:24.05px;width:100px;top:232.84px;text-align:center;">0000999993883975</div>
<div class="cell" style="left:125.55px;width:60px;top:232.84px;text-align:center;">anon_S8334</div>
<div class="cell" style="left:186.05px;width:30px;top:232.84px;text-align:center;">男</div>
<div class="cell" style="left:218.45px;width:30px;top:232.84px;text-align:center;">55</div>
<div class="cell" style="left:758.95px;width:46px;top:232.84px;text-align:center;">0-通过</div>
<div class="cell" style="left:2px;top:246.35px;font-size:10.5px;color:#3a3a3a;">5934</div>
<div class="cell" style="left:24.05px;width:100px;top:246.35px;text-align:center;">0000999993893520</div>
<div class="cell" style="left:125.55px;width:60px;top:246.35px;text-align:center;">anon_S9282</div>
<div class="cell" style="left:186.05px;width:30px;top:246.35px;text-align:center;">男</div>
<div class="cell" style="left:218.45px;width:30px;top:246.35px;text-align:center;">45</div>
<div class="cell" style="left:758.95px;width:46px;top:246.35px;text-align:center;">0-通过</div>
<div class="cell" style="left:2px;top:259.86px;font-size:10.5px;color:#3a3a3a;">5935</div>
<div class="cell" style="left:24.05px;width:100px;top:259.86px;text-align:center;">0000999993896327</div>
<div class="cell" style="left:125.55px;width:60px;top:259.86px;text-align:center;">anon_S9561</div>
<div class="cell" style="left:186.05px;width:30px;top:259.86px;text-align:center;">男</div>
<div class="cell" style="left:218.45px;width:30px;top:259.86px;text-align:center;">25</div>
<div class="cell" style="left:758.95px;width:46px;top:259.86px;text-align:center;">0-通过</div>
<div class="cell" style="left:2px;top:273.37px;font-size:10.5px;color:#3a3a3a;">5936</div>
<div class="cell" style="left:24.05px;width:100px;top:273.37px;text-align:center;">0000999993884800</div>
<div class="cell" style="left:125.55px;width:60px;top:273.37px;text-align:center;">anon_S8417</div>
<div class="cell" style="left:186.05px;width:30px;top:273.37px;text-align:center;">男</div>
<div class="cell" style="left:218.45px;width:30px;top:273.37px;text-align:center;">45</div>
<div class="cell" style="left:758.95px;width:46px;top:273.37px;text-align:center;">0-通过</div>
<div class="cell" style="left:2px;top:286.88px;font-size:10.5px;color:#3a3a3a;">5937</div>
<div class="cell" style="left:24.05px;width:100px;top:286.88px;text-align:center;">0000999993883590</div>
<div class="cell" style="left:125.55px;width:60px;top:286.88px;text-align:center;">anon_S8296</div>
<div class="cell" style="left:186.05px;width:30px;top:286.88px;text-align:center;">女</div>
<div class="cell" style="left:218.45px;width:30px;top:286.88px;text-align:center;">45</div>
<div class="cell" style="left:758.95px;width:46px;top:286.88px;text-align:center;">0-通过</div>
<div class="cell" style="left:2px;top:300.39px;font-size:10.5px;color:#3a3a3a;">5938</div>
<div class="cell" style="left:24.05px;width:100px;top:300.39px;text-align:center;">0000999993898891</div>
<div class="cell" style="left:125.55px;width:60px;top:300.39px;text-align:center;">anon_S9753</div>
<div class="cell" style="left:186.05px;width:30px;top:300.39px;text-align:center;">男</div>
<div class="cell" style="left:218.45px;width:30px;top:300.39px;text-align:center;">65</div>
<div class="cell" style="left:758.95px;width:46px;top:300.39px;text-align:center;">0-通过</div>
<div class="cell" style="left:2px;top:313.9px;font-size:10.5px;color:#3a3a3a;">5939</div>
<div class="cell" style="left:24.05px;width:100px;top:313.9px;text-align:center;">0000999993884708</div>
<div class="cell" style="left:125.55px;width:60px;top:313.9px;text-align:center;">anon_S8407</div>
<div class="cell" style="left:186.05px;width:30px;top:313.9px;text-align:center;">女</div>
<div class="cell" style="left:218.45px;width:30px;top:313.9px;text-align:center;">25</div>
<div class="cell" style="left:758.95px;width:46px;top:313.9px;text-align:center;">0-通过</div>
<div class="cell" style="left:2px;top:327.41px;font-size:10.5px;color:#3a3a3a;">5940</div>
<div class="cell" style="left:24.05px;width:100px;top:327.41px;text-align:center;">0000999993894535</div>
<div class="cell" style="left:125.55px;width:60px;top:327.41px;text-align:center;">anon_S9383</div>
<div class="cell" style="left:186.05px;width:30px;top:327.41px;text-align:center;">男</div>
<div class="cell" style="left:218.45px;width:30px;top:327.41px;text-align:center;">65</div>
<div class="cell" style="left:758.95px;width:46px;top:327.41px;text-align:center;">0-通过</div>
<div class="cell" style="left:2px;top:340.92px;font-size:10.5px;color:#3a3a3a;">5941</div>
<div class="cell" style="left:24.05px;width:100px;top:340.92px;text-align:center;">0000999993892243</div>
<div class="cell" style="left:125.55px;width:60px;top:340.92px;text-align:center;">anon_S9154</div>
<div class="cell" style="left:186.05px;width:30px;top:340.92px;text-align:center;">男</div>
<div class="cell" style="left:218.45px;width:30px;top:340.92px;text-align:center;">45</div>
<div class="cell" style="left:758.95px;width:46px;top:340.92px;text-align:center;">0-通过</div>
<div class="cell" style="left:2px;top:354.43px;font-size:10.5px;color:#3a3a3a;">5942</div>
<div class="cell" style="left:24.05px;width:100px;top:354.43px;text-align:center;">0000999993896123</div>
<div class="cell" style="left:125.55px;width:60px;top:354.43px;text-align:center;">anon_S9541</div>
<div class="cell" style="left:186.05px;width:30px;top:354.43px;text-align:center;">男</div>
<div class="cell" style="left:218.45px;width:30px;top:354.43px;text-align:center;">35</div>
<div class="cell" style="left:758.95px;width:46px;top:354.43px;text-align:center;">0-通过</div>
<div class="cell" style="left:2px;top:367.94px;font-size:10.5px;color:#3a3a3a;">5943</div>
<div class="cell" style="left:24.05px;width:100px;top:367.94px;text-align:center;">0000999993898552</div>
<div class="cell" style="left:125.55px;width:60px;top:367.94px;text-align:center;">anon_S9720</div>
<div class="cell" style="left:186.05px;width:30px;top:367.94px;text-align:center;">男</div>
<div class="cell" style="left:218.45px;width:30px;top:367.94px;text-align:center;">35</div>
<div class="cell" style="left:758.95px;width:46px;top:367.94px;text-align:center;">0-通过</div>
<div class="cell" style="left:2px;top:381.45px;font-size:10.5px;color:#3a3a3a;">5944</div>
<div class="cell" style="left:24.05px;width:100px;top:381.45px;text-align:center;">0000999993882495</div>
<div class="cell" style="left:125.55px;width:60px;top:381.45px;text-align:center;">anon_S8186</div>
<div class="cell" style="left:186.05px;width:30px;top:381.45px;text-align:center;">男</div>
<div class="cell" style="left:218.45px;width:30px;top:381.45px;text-align:center;">45</div>
<div class="cell" style="left:758.95px;width:46px;top:381.45px;text-align:center;">0-通过</div>
<div class="cell" style="left:2px;top:394.96px;font-size:10.5px;color:#3a3a3a;">5945</div>
<div class="cell" style="left:24.05px;width:100px;top:394.96px;text-align:center;">0000999993891782</div>
<div class="cell" style="left:125.55px;width:60px;top:394.96px;text-align:center;">anon_S9109</div>
<div class="cell" style="left:186.05px;width:30px;top:394.96px;text-align:center;">男</div>
<div class="cell" style="left:218.45px;width:30px;top:394.96px;text-align:center;">45</div>
<div class="cell" style="left:758.95px;width:46px;top:394.96px;text-align:center;">0-通过</div>
<div class="cell" style="left:2px;top:408.47px;font-size:10.5px;color:#3a3a3a;">5946</div>
<div class="cell" style="left:24.05px;width:100px;top:408.47px;text-align:center;">0000999993886625</div>
<div class="cell" style="left:125.55px;width:60px;top:408.47px;text-align:center;">anon_S8598</div>
<div class="cell" style="left:186.05px;width:30px;top:408.47px;text-align:center;">男</div>
<div class="cell" style="left:218.45px;width:30px;top:408.47px;text-align:center;">45</div>
<div class="cell" style="left:758.95px;width:46px;top:408.47px;text-align:center;">0-通过</div>
<div class="cell" style="left:2px;top:421.98px;font-size:10.5px;color:#3a3a3a;">5947</div>
<div class="cell" style="left:24.05px;width:100px;top:421.98px;text-align:center;">0000999993888293</div>
<div class="cell" style="left:125.55px;width:60px;top:421.98px;text-align:center;">anon_S8761</div>
<div class="cell" style="left:186.05px;width:30px;top:421.98px;text-align:center;">女</div>
<div class="cell" style="left:218.45px;width:30px;top:421.98px;text-align:center;">45</div>
<div class="cell" style="left:758.95px;width:46px;top:421.98px;text-align:center;">0-通过</div>
<div class="cell" style="left:2px;top:435.49px;font-size:10.5px;color:#3a3a3a;">5948</div>
<div class="cell" style="left:24.05px;width:100px;top:435.49px;text-align:center;">0000999993891806</div>
<div class="cell" style="left:125.55px;width:60px;top:435.49px;text-align:center;">anon_S9111</div>
<div class="cell" style="left:186.05px;width:30px;top:435.49px;text-align:center;">男</div>
<div class="cell" style="left:218.45px;width:30px;top:435.49px;text-align:center;">45</div>
<div class="cell" style="left:758.95px;width:46px;top:435.49px;text-align:center;">0-通过</div>
<div class="cell" style="left:2px;top:449px;font-size:10.5px;color:#3a3a3a;">5949</div>
<div class="cell" style="left:24.05px;width:100px;top:449px;text-align:center;">0000999993891908</div>
<div class="cell" style="left:125.55px;width:60px;top:449px;text-align:center;">anon_S9121</div>
<div class="cell" style="left:186.05px;width:30px;top:449px;text-align:center;">男</div>
<div class="cell" style="left:218.45px;width:30px;top:449px;text-align:center;">65</div>
<div class="cell" style="left:758.95px;width:46px;top:449px;text-align:center;">0-通过</div>
<div class="cell" style="left:2px;top:462.51px;font-size:10.5px;color:#3a3a3a;">5950</div>
<div class="cell" style="left:24.05px;width:100px;top:462.51px;text-align:center;">0000999993897558</div>
<div class="cell" style="left:125.55px;width:60px;top:462.51px;text-align:center;">anon_S9684</div>
<div class="cell" style="left:186.05px;width:30px;top:462.51px;text-align:center;">男</div>
<div class="cell" style="left:218.45px;width:30px;top:462.51px;text-align:center;">45</div>
<div class="cell" style="left:758.95px;width:46px;top:462.51px;text-align:center;">0-通过</div>
<div class="cell" style="left:2px;top:476.02px;font-size:10.5px;color:#3a3a3a;">5951</div>
<div class="cell" style="left:24.05px;width:100px;top:476.02px;text-align:center;">0000999993895448</div>
<div class="cell" style="left:125.55px;width:60px;top:476.02px;text-align:center;">anon_S9473</div>
<div class="cell" style="left:186.05px;width:30px;top:476.02px;text-align:center;">男</div>
<div class="cell" style="left:218.45px;width:30px;top:476.02px;text-align:center;">65</div>
<div class="cell" style="left:758.95px;width:46px;top:476.02px;text-align:center;">0-通过</div>
<div class="cell" style="left:2px;top:489.53px;font-size:10.5px;color:#3a3a3a;">5952</div>
<div class="cell" style="left:24.05px;width:100px;top:489.53px;text-align:center;">0000999993895346</div>
<div class="cell" style="left:125.55px;width:60px;top:489.53px;text-align:center;">anon_S9463</div>
<div class="cell" style="left:186.05px;width:30px;top:489.53px;text-align:center;">男</div>
<div class="cell" style="left:218.45px;width:30px;top:489.53px;text-align:center;">55</div>
<div class="cell" style="left:758.95px;width:46px;top:489.53px;text-align:center;">0-通过</div>
<div class="cell" style="left:2px;top:503.04px;font-size:10.5px;color:#3a3a3a;">5953</div>
<div class="cell" style="left:24.05px;width:100px;top:503.04px;text-align:center;">0000999993890552</div>
<div class="cell" style="left:125.55px;width:60px;top:503.04px;text-align:center;">anon_S8986</div>
<div class="cell" style="left:186.05px;width:30px;top:503.04px;text-align:center;">男</div>
<div class="cell" style="left:218.45px;width:30px;top:503.04px;text-align:center;">55</div>
<div class="cell" style="left:758.95px;width:46px;top:503.04px;text-align:center;">0-通过</div>
<div class="cell" style="left:2px;top:516.55px;font-size:10.5px;color:#3a3a3a;">5954</div>
<div class="cell" style="left:24.05px;width:100px;top:516.55px;text-align:center;">0000999993884323</div>
<div class="cell" style="left:125.55px;width:60px;top:516.55px;text-align:center;">anon_S8369</div>
<div class="cell" style="left:186.05px;width:30px;top:516.55px;text-align:center;">女</div>
<div class="cell" style="left:218.45px;width:30px;top:516.55px;text-align:center;">55</div>
<div class="cell" style="left:758.95px;width:46px;top:516.55px;text-align:center;">0-通过</div>
<div class="cell" style="left:2px;top:530.06px;font-size:10.5px;color:#3a3a3a;">5955</div>
<div class="cell" style="left:24.05px;width:100px;top:530.06px;text-align:center;">0000999993898212</div>
<div class="cell" style="left:125.55px;width:60px;top:530.06px;text-align:center;">anon_S9667</div>
<div class="cell" style="left:186.05px;width:30px;top:530.06px;text-align:center;">男</div>
<div class="cell" style="left:216.05px;width:34.80000000000001px;top:530.06px;text-align:center;overflow:hidden;">53</div>
<div class="cell" style="left:250.85px;width:40.89999999999998px;top:530.06px;text-align:center;overflow:hidden;">已婚</div>
<div class="cell" style="left:291.75px;width:45.10000000000002px;top:530.06px;text-align:center;overflow:hidden;">河北</div>
<div class="cell" style="left:336.85px;width:46.19999999999999px;top:530.06px;text-align:center;overflow:hidden;">硕士及以上</div>
<div class="cell" style="left:383.05px;width:37.0px;top:530.06px;text-align:center;overflow:hidden;">自购房</div>
<div class="cell" style="left:420.05px;width:45.60000000000002px;top:530.06px;text-align:center;overflow:hidden;">私营企业</div>
<div class="cell" style="left:465.65px;width:32.0px;top:530.06px;text-align:center;overflow:hidden;">28</div>
<div class="cell" style="left:497.65px;width:49.2999999999999px;top:530.06px;text-align:center;overflow:hidden;">30000000</div>
<div class="cell" style="left:546.95px;width:28.200000000000045px;top:530.06px;text-align:center;overflow:hidden;">有</div>
<div class="cell" style="left:575.15px;width:28.100000000000023px;top:530.06px;text-align:center;overflow:hidden;">有</div>
<div class="cell" style="left:603.25px;width:42.09999999999991px;top:530.06px;text-align:center;overflow:hidden;">100</div>
<div class="cell" style="left:645.35px;width:68.10000000000002px;top:530.06px;text-align:center;overflow:hidden;">A-优质客户</div>
<div class="cell" style="left:713.45px;width:45.700000000000045px;top:530.06px;text-align:center;overflow:hidden;">100000</div>
<div class="cell" style="left:759.15px;width:45.60000000000002px;top:530.06px;text-align:center;overflow:hidden;">0-通过</div>
<div class="cell" style="left:2px;top:542.37px;font-size:10.5px;color:#3a3a3a;">5956</div>
<div style="left:1066px;top:164px;width:14px;height:384px;background:#e9e9e9;"></div>
<div style="left:1067.5px;top:165.5px;width:11px;height:10.5px;background:#fff;border:1px solid #c8c8c8;"></div>
<svg style="position:absolute;left:1069.5px;top:169px" width="7" height="4" viewBox="0 0 7 4"><path d="M0 4 L3.5 0 L7 4 Z" fill="#333"/></svg>
<div style="left:1067px;top:526px;width:12px;height:12px;background:#fff;border:1px solid #c8c8c8;"></div>
<div style="left:1067px;top:539px;width:12px;height:9px;background:#fff;border:1px solid #c8c8c8;"></div>
<svg style="position:absolute;left:1070px;top:542px" width="7" height="4" viewBox="0 0 7 4"><path d="M0 0 L3.5 4 L7 0 Z" fill="#333"/></svg>
<div style="left:0px;top:548px;width:1080px;height:15px;background:#e6e6e6;"></div>
<svg style="position:absolute;left:15px;top:552px" width="4" height="7" viewBox="0 0 4 7"><path d="M3.5 0.5 L0.5 3.5 L3.5 6.5" fill="none" stroke="#bbb"/></svg>
<svg style="position:absolute;left:31px;top:552px" width="4" height="7" viewBox="0 0 4 7"><path d="M0.5 0.5 L3.5 3.5 L0.5 6.5" fill="none" stroke="#bbb"/></svg>
<div style="left:58px;top:548px;width:71px;height:15px;background:#fff;border-bottom:1.5px solid #2a7a48;"></div>
<div class="t" style="left:64.5px;top:548.5px;color:#3f8a5a;font-size:10px;letter-spacing:-0.5px;line-height:13px;">客户信用记录</div>
<div class="t" style="left:136px;top:548.5px;color:#333;font-size:10px;letter-spacing:-0.5px;line-height:13px;">申请客户信息</div>
<div style="left:199.5px;top:551px;width:1px;height:10px;background:#bdbdbd;"></div>
<div class="t" style="left:206px;top:548.5px;color:#333;font-size:10px;letter-spacing:-0.5px;line-height:13px;">拖欠历史记录</div>
<div style="left:270.5px;top:551px;width:1px;height:10px;background:#bdbdbd;"></div>
<div class="t" style="left:277.5px;top:548.5px;color:#333;font-size:10px;letter-spacing:-0.5px;line-height:13px;">消费历史记录</div>
<div style="left:341.5px;top:551px;width:1px;height:10px;background:#bdbdbd;"></div>
<svg style="position:absolute;left:358px;top:549px" width="13" height="13" viewBox="0 0 13 13"><circle cx="6.5" cy="6.5" r="5.8" fill="none" stroke="#666" stroke-width="1"/><path d="M6.5 3.5 V9.5 M3.5 6.5 H9.5" stroke="#666" stroke-width="1"/></svg>
<div style="left:646.5px;top:551.5px;width:1.2px;height:1.2px;background:#999;"></div>
<div style="left:646.5px;top:554.5px;width:1.2px;height:1.2px;background:#999;"></div>
<div style="left:646.5px;top:557.5px;width:1.2px;height:1.2px;background:#999;"></div>
<div style="left:656px;top:551px;width:381px;height:11px;background:#fff;border:1px solid #c8c8c8;"></div>
<div style="left:656px;top:551px;width:11px;height:11px;background:#fff;border:1px solid #c8c8c8;"></div>
<svg style="position:absolute;left:659px;top:554px" width="4" height="6" viewBox="0 0 4 6"><path d="M4 0 L0 3 L4 6 Z" fill="#222"/></svg>
<div style="left:1056px;top:551px;width:10.5px;height:11px;background:#fff;border:1px solid #c8c8c8;"></div>
<svg style="position:absolute;left:1059.5px;top:554px" width="4" height="6" viewBox="0 0 4 6"><path d="M0 0 L4 3 L0 6 Z" fill="#222"/></svg>
<div style="left:1066px;top:548px;width:14px;height:15px;background:#e6e6e6;"></div>
<div style="left:0px;top:563px;width:1080px;height:17px;background:#f3f3f3;"></div>
<div class="t" style="left:8px;top:567px;color:#555;font-size:8.5px;line-height:11px;">就绪</div>
<svg style="position:absolute;left:39px;top:567px" width="10" height="10" viewBox="0 0 10 10"><path d="M8 3 A4 4 0 1 0 8.5 6" fill="none" stroke="#555" stroke-width="1"/><path d="M3.5 5 L5 7 L9 2" fill="none" stroke="#555" stroke-width="1"/></svg>
<div class="t" style="left:51.5px;top:567.5px;color:#555;font-size:9px;letter-spacing:-0.45px;line-height:11px;">辅助功能: 一切就绪</div>
<svg style="position:absolute;left:873px;top:566px" width="13" height="12" viewBox="0 0 13 12"><rect x="0.5" y="0.5" width="11" height="10" fill="none" stroke="#8a8a8a"/><path d="M4 1 V10 M8 1 V10 M1 4 H11 M1 7.3 H11" stroke="#8a8a8a" stroke-width="0.8"/></svg>
<svg style="position:absolute;left:902px;top:566px" width="13" height="12" viewBox="0 0 13 12"><rect x="0.5" y="0.5" width="11" height="10" fill="none" stroke="#8a8a8a"/><rect x="3" y="2.5" width="6" height="6" fill="none" stroke="#8a8a8a" stroke-width="0.8"/></svg>
<svg style="position:absolute;left:930px;top:566px" width="13" height="12" viewBox="0 0 13 12"><rect x="0.5" y="0.5" width="11" height="10" fill="none" stroke="#8a8a8a"/><path d="M4 1 V6 H8 V1" fill="none" stroke="#8a8a8a" stroke-width="0.8"/></svg>
<div style="left:955px;top:572px;width:4px;height:1px;background:#999;"></div>
<div style="left:963px;top:572px;width:70px;height:1px;background:#8a8a8a;"></div>
<div style="left:997px;top:569px;width:1px;height:6px;background:#555;"></div>
<svg style="position:absolute;left:1036px;top:568px" width="8" height="8" viewBox="0 0 8 8"><path d="M4 0 V8 M0 4 H8" stroke="#aaa"/></svg>
<div class="t" style="left:1052px;top:566.5px;color:#999;font-size:9.5px;line-height:12px;">100%</div>
<div style="left:0px;top:580px;width:1080px;height:28px;background:#1e2a34;"></div>
<svg style="position:absolute;left:11px;top:588px" width="12" height="13" viewBox="0 0 12 13"><path d="M0 1.8 L5.3 1 V6 H0 Z M6.2 0.9 L12 0 V6 H6.2 Z M0 6.9 H5.3 V11.9 L0 11.1 Z M6.2 6.9 H12 V12.9 L6.2 12 Z" fill="#fff"/></svg>
<div style="left:34px;top:580px;width:202px;height:28px;background:#f0f0f0;border-top:1px solid #dcdcdc;"></div>
<svg style="position:absolute;left:42px;top:587px" width="12" height="13" viewBox="0 0 12 13"><circle cx="7.5" cy="4.5" r="3.8" fill="none" stroke="#222" stroke-width="1.1"/><path d="M4.8 7.5 L0.8 12" stroke="#222" stroke-width="1.2"/></svg>
<div class="t" style="left:62px;top:586px;color:#2a2a2a;font-size:11px;line-height:16px;">搜索</div>
<svg style="position:absolute;left:184px;top:580px" width="52" height="28" viewBox="0 0 52 28"><path d="M10 8 L7 22 L20 13 Z" fill="#f2e48a"/><ellipse cx="10" cy="8.5" rx="8.5" ry="3.2" fill="#8a8a98" transform="rotate(-35 10 8.5)"/><ellipse cx="7.5" cy="6.5" rx="3.5" ry="2.6" fill="#5ab8f0" transform="rotate(-35 7.5 6.5)"/><path d="M11 27 L32.5 6 L50 26 Z" fill="#a88474"/><path d="M27 11 L32.5 6 L37 11 L34 13 L31 11 Z" fill="#e8d8d8"/><path d="M22 22 L28 16 L33 22 Z" fill="#e8dada"/><path d="M0 28 Q8 22 18 24 Q30 20 40 25 Q46 24 52 25 V28 Z" fill="#3a8a3a"/><path d="M45 10 L40 28 H50 Z" fill="#2f7a3a"/><path d="M39 14 L35 28 H44 Z" fill="#3a8a3a"/><rect x="42" y="25" width="1.5" height="3" fill="#7a4a20"/></svg>
<div style="left:518px;top:580px;width:32px;height:28px;background:#3a464f;"></div>
<div style="left:241px;top:606px;width:28px;height:2px;background:#7fa8d8;"></div>
<div style="left:275.6px;top:606px;width:28px;height:2px;background:#7fa8d8;"></div>
<div style="left:310.8px;top:606px;width:28px;height:2px;background:#7fa8d8;"></div>
<div style="left:346px;top:606px;width:28px;height:2px;background:#7fa8d8;"></div>
<div style="left:381px;top:606px;width:28px;height:2px;background:#7fa8d8;"></div>
<div style="left:415.4px;top:606px;width:28px;height:2px;background:#7fa8d8;"></div>
<div style="left:450.9px;top:606px;width:28px;height:2px;background:#7fa8d8;"></div>
<div style="left:485.7px;top:606px;width:28px;height:2px;background:#7fa8d8;"></div>
<div style="left:520.3px;top:606px;width:28px;height:2px;background:#7fa8d8;"></div>
<svg style="position:absolute;left:245px;top:584px" width="20" height="20" viewBox="0 0 20 20"><defs><radialGradient id="ff" cx="0.35" cy="0.75" r="0.8"><stop offset="0" stop-color="#ffd02a"/><stop offset="0.5" stop-color="#ff7a1a"/><stop offset="1" stop-color="#e8223a"/></radialGradient></defs><circle cx="10" cy="11" r="8.2" fill="url(#ff)"/><circle cx="11" cy="10" r="4.2" fill="#7a3ae0"/><path d="M11 1.5 L13.5 4.5 Q17 4 18 9 Q15 6 12 6.5 Z" fill="#ffb020"/><path d="M2.5 8 Q5 2 10 2.5 Q6 5 6.5 9 Z" fill="#ff9a20"/></svg>
<svg style="position:absolute;left:279px;top:584px" width="22" height="20" viewBox="0 0 22 20"><ellipse cx="8.5" cy="8" rx="7" ry="6" fill="#4ac85a"/><path d="M4 12 L3 15.5 L7 13 Z" fill="#4ac85a"/><ellipse cx="14" cy="13" rx="6" ry="5" fill="#e6e6e6"/><path d="M17 17 L18.5 19 L15 17.5 Z" fill="#e6e6e6"/><circle cx="6" cy="6.5" r="0.9" fill="#1e6a2a"/><circle cx="10.5" cy="6.5" r="0.9" fill="#1e6a2a"/><circle cx="12" cy="12" r="0.8" fill="#777"/><circle cx="15.8" cy="12" r="0.8" fill="#777"/></svg>
<svg style="position:absolute;left:314px;top:584px" width="22" height="20" viewBox="0 0 22 20"><path d="M9 2.5 A7 6.3 0 1 1 6 14.5 L3 16.5 L4 12.5 A7 6.3 0 0 1 9 2.5 Z" fill="none" stroke="#3a8ae8" stroke-width="2.2"/><path d="M16.5 8.5 L19 11.5 L16.5 14.5 L14 11.5 Z" fill="#f0c020"/><path d="M16.5 8.5 L19 11.5 L16.5 11.5 Z" fill="#3ac060"/><path d="M14 11.5 L16.5 14.5 L16.5 11.5 Z" fill="#f07a20"/><path d="M19 11.5 L16.5 14.5 L16.5 11.5 Z" fill="#3aa0f0"/></svg>
<svg style="position:absolute;left:350px;top:584px" width="20" height="20" viewBox="0 0 20 20"><defs><linearGradient id="eg" x1="0" y1="1" x2="1" y2="0"><stop offset="0" stop-color="#0a4aa8"/><stop offset="0.55" stop-color="#2a8ae0"/><stop offset="1" stop-color="#5ad07a"/></linearGradient></defs><circle cx="10" cy="10" r="8.8" fill="url(#eg)"/><path d="M6 12.5 Q6 8 10.5 8 Q14 8 14.5 11 H9 Q9.5 14.5 13.5 15 Q9 18 6.5 15 Z" fill="#1e2a34" opacity="0.0"/><ellipse cx="10.8" cy="12" rx="3.6" ry="3" fill="#1a5ab0"/><ellipse cx="11.5" cy="12.2" rx="2.6" ry="2.2" fill="#1e2a34" opacity="0.35"/></svg>
<svg style="position:absolute;left:386.5px;top:585.5px" width="17" height="17" viewBox="0 0 20 20"><rect x="1" y="1" width="18" height="18" rx="3" fill="#fff"/><path d="M5 5 H15 M10 5 V15" stroke="#222" stroke-width="2.4"/></svg>
<svg style="position:absolute;left:420.6px;top:586.4px" width="17.8" height="15.3" viewBox="0 0 21 18"><path d="M1 2 H8 L10 4 H20 V17 H1 Z" fill="#f0c040"/><rect x="1" y="7" width="19" height="10" fill="#f8d860"/><rect x="6" y="10" width="9" height="6" fill="#3a8ad0"/></svg>
<svg style="position:absolute;left:457.4px;top:586.4px" width="15.3" height="15.3" viewBox="0 0 18 18"><path d="M3 6 L4 1 L7 4 H11 L14 1 L15 6 V17 H3 Z" fill="#2a3a6a"/><circle cx="7" cy="8" r="0.9" fill="#8ad0ff"/><circle cx="11" cy="8" r="0.9" fill="#8ad0ff"/></svg>
<svg style="position:absolute;left:490.6px;top:586.4px" width="18.7" height="16.1" viewBox="0 0 22 19"><rect x="1" y="2" width="16" height="12" fill="none" stroke="#3ac06a" stroke-width="2"/><circle cx="16" cy="14" r="4.5" fill="#d8d8d8"/></svg>
<svg style="position:absolute;left:525.6px;top:586.4px" width="17.8" height="16.1" viewBox="0 0 21 19"><rect x="6" y="1" width="14" height="17" fill="#21a366"/><rect x="6" y="6.5" width="14" height="5.5" fill="#107c41"/><rect x="1" y="4" width="10" height="11" rx="1" fill="#185c37"/><text x="3" y="12.5" font-size="8" font-family="Liberation Sans" font-weight="bold" fill="#fff">x</text></svg>
<svg style="position:absolute;left:796px;top:584px" width="22" height="16" viewBox="0 0 22 16"><ellipse cx="11" cy="11" rx="9" ry="4" fill="#b8d0f0"/><circle cx="9" cy="8.5" r="4.5" fill="#d0e0f8"/><circle cx="15" cy="5" r="3.6" fill="#e03838"/><text x="13.6" y="7.2" font-size="5.5" fill="#fff" font-family="Liberation Sans">1</text></svg>
<div class="t" style="left:821px;top:586px;color:#fff;font-size:11px;line-height:16px;">22°C 阴</div>
<svg style="position:absolute;left:877.5px;top:589px" width="10" height="7" viewBox="0 0 10 7"><path d="M1 6 L5 2 L9 6" fill="none" stroke="#fff" stroke-width="1.1"/></svg>
<svg style="position:absolute;left:895px;top:585px" width="9" height="15" viewBox="0 0 9 15"><ellipse cx="4.5" cy="7.5" rx="4.5" ry="7.5" fill="#1a8af0"/><path d="M2.5 4.5 L6.5 9.5 L4.5 11.5 V3.5 L6.5 5.5 L2.5 10.5" fill="none" stroke="#fff" stroke-width="0.8"/></svg>
<svg style="position:absolute;left:910px;top:588px" width="12" height="10" viewBox="0 0 12 10"><path d="M0 4 H3 L7 1 V9 L3 6 H0 Z" fill="#ccc"/></svg>
<svg style="position:absolute;left:930px;top:589px" width="14" height="10" viewBox="0 0 14 10"><ellipse cx="7" cy="6" rx="6" ry="3" fill="#aaa"/></svg>
<svg style="position:absolute;left:950px;top:589px" width="14" height="10" viewBox="0 0 14 10"><rect x="1" y="1" width="11" height="8" fill="none" stroke="#aaa"/></svg>
<svg style="position:absolute;left:968px;top:587px" width="14" height="12" viewBox="0 0 14 12"><path d="M1 11 A10 10 0 0 1 13 11" fill="none" stroke="#aaa"/><path d="M4 11 A6 6 0 0 1 10 11" fill="none" stroke="#aaa"/></svg>
<div class="t" style="left:985px;top:586px;color:#ddd;font-size:11px;line-height:16px;">英</div>
<div class="t" style="left:1003px;top:582px;color:#ccc;font-size:9px;line-height:12px;">17:31</div>
<div class="t" style="left:997px;top:594px;color:#eee;font-size:9.5px;line-height:12px;">2024/7/2</div>
<svg style="position:absolute;left:1054px;top:584px" width="18" height="20" viewBox="0 0 18 20"><path d="M1 2 H14 V11 H6 L3 14 V11 H1 Z" fill="none" stroke="#ddd"/><circle cx="11.5" cy="14.5" r="4.5" fill="#1e2a34" stroke="#ddd" stroke-width="0.8"/><text x="9.3" y="17" font-size="6.5" fill="#fff" font-family="Liberation Sans">4</text></svg>
<div class="t" style="left:906px;top:579px;color:rgba(255,255,255,0.72);font-size:19.5px;line-height:24px;letter-spacing:0px;">CSDN @Frank牛蛙</div>
<div style="left:232px;top:93.5px;width:562.8px;height:438px;background:#f0f0f0;border:1px solid #b4b4b4;box-shadow:0 2px 8px rgba(0,0,0,0.22);"></div>
<div style="left:232px;top:94px;width:562.8px;height:58px;background:#fff;border-bottom:1px solid #d5d5d5;"></div>
<svg style="position:absolute;left:238px;top:98px" width="11" height="11" viewBox="0 0 11 11"><path d="M1.5 9.5 Q3 3.5 9 1.8" fill="none" stroke="#707880" stroke-width="1.6"/><path d="M4.5 3.8 L10 10" stroke="#4a70d0" stroke-width="1.5"/></svg>
<div class="t" style="left:252px;top:98.5px;color:#222;font-size:9px;letter-spacing:-0.6px;">浏览数据</div>
<div style="left:706px;top:104px;width:8px;height:1px;background:#ccc;"></div>
<svg style="position:absolute;left:740.5px;top:100.5px" width="8" height="8" viewBox="0 0 8 8"><rect x="0.5" y="0.5" width="7" height="7" fill="none" stroke="#444"/></svg>
<svg style="position:absolute;left:773.5px;top:100.5px" width="8" height="8" viewBox="0 0 8 8"><path d="M0.5 0.5 L7.5 7.5 M7.5 0.5 L0.5 7.5" stroke="#444" stroke-width="0.9"/></svg>
<div class="t" style="left:240px;top:117.5px;color:#111;font-size:9px;"><b>浏览数据</b></div>
<div class="t" style="left:257px;top:129.5px;color:#222;font-size:9px;letter-spacing:-0.35px;">查看数据中离散值的计数。</div>
<svg style="position:absolute;left:752px;top:114px" width="42" height="38" viewBox="0 0 42 38"><defs><linearGradient id="mg" x1="0" x2="1"><stop offset="0" stop-color="#fff"/><stop offset="1" stop-color="#dde6f4"/></linearGradient><radialGradient id="lens" cx="0.4" cy="0.35"><stop offset="0" stop-color="#d8f0f8"/><stop offset="1" stop-color="#7ab8d8"/></radialGradient></defs><rect x="0" y="0" width="42" height="38" fill="url(#mg)"/><path d="M14 38.5 L24 25" stroke="#8a4a08" stroke-width="5.5"/><path d="M14 38.5 L24 25" stroke="#e08a20" stroke-width="3"/><ellipse cx="28.5" cy="15" rx="8.5" ry="11" fill="url(#lens)" stroke="#7a828a" stroke-width="2.2" transform="rotate(15 28.5 15)"/></svg>
<div style="left:245px;top:176px;width:535.5px;height:293.5px;background:#fff;border-left:1px solid #8c8c8c;border-top:1px solid #8c8c8c;"></div>
<div style="left:266px;top:185.5px;width:507px;height:1px;background:#a6a6a6;"></div>
<div class="t" style="left:216.5px;top:180px;width:49px;text-align:right;font-size:7.8px;line-height:11px;color:#333;">2370</div>
<div style="left:266px;top:239.45px;width:507px;height:1px;background:#a6a6a6;"></div>
<div class="t" style="left:216.5px;top:233.95px;width:49px;text-align:right;font-size:7.8px;line-height:11px;color:#333;">1896</div>
<div style="left:266px;top:293.4px;width:507px;height:1px;background:#a6a6a6;"></div>
<div class="t" style="left:216.5px;top:287.9px;width:49px;text-align:right;font-size:7.8px;line-height:11px;color:#333;">1422</div>
<div style="left:266px;top:347.35px;width:507px;height:1px;background:#a6a6a6;"></div>
<div class="t" style="left:216.5px;top:341.85px;width:49px;text-align:right;font-size:7.8px;line-height:11px;color:#333;">948</div>
<div style="left:266px;top:401.3px;width:507px;height:1px;background:#a6a6a6;"></div>
<div class="t" style="left:216.5px;top:395.8px;width:49px;text-align:right;font-size:7.8px;line-height:11px;color:#333;">474</div>
<div class="t" style="left:216.5px;top:449.75px;width:49px;text-align:right;font-size:7.8px;line-height:11px;color:#333;">0</div>
<div style="left:268.8px;top:185.5px;width:1px;height:272px;background:#8f8f8f;"></div>
<div style="left:266px;top:455.2px;width:514px;height:1px;background:#a0a0a0;"></div>
<div style="left:269.5px;top:455.5px;width:1px;height:3px;background:#a3a3a3;"></div>
<div style="left:397px;top:455.5px;width:1px;height:3px;background:#a3a3a3;"></div>
<div style="left:524.5px;top:455.5px;width:1px;height:3px;background:#a3a3a3;"></div>
<div style="left:651.5px;top:455.5px;width:1px;height:3px;background:#a3a3a3;"></div>
<div style="left:779px;top:455.5px;width:1px;height:3px;background:#a3a3a3;"></div>
<div style="left:301.2px;top:186.3px;width:63.6px;height:269.2px;background:#567bbb;"></div>
<div style="left:428.5px;top:223.8px;width:63.6px;height:231.7px;background:#567bbb;"></div>
<div style="left:556px;top:324.9px;width:63.6px;height:130.6px;background:#567bbb;"></div>
<div style="left:683.3px;top:409.1px;width:63.6px;height:46.4px;background:#567bbb;"></div>
<div class="t" style="left:293px;width:80px;top:456.5px;text-align:center;font-size:8px;line-height:11px;color:#222;">D-风险客户</div>
<div class="t" style="left:420.4px;width:80px;top:456.5px;text-align:center;font-size:8px;line-height:11px;color:#222;">C-普通客户</div>
<div class="t" style="left:547.8px;width:80px;top:456.5px;text-align:center;font-size:8px;line-height:11px;color:#222;">B-良好客户</div>
<div class="t" style="left:675.2px;width:80px;top:456.5px;text-align:center;font-size:8px;line-height:11px;color:#222;">A-优质客户</div>
<div style="left:245px;top:481px;width:18px;height:15px;background:#cce4f7;border:1px solid #4a90d9;"></div>
<svg style="position:absolute;left:249px;top:484px" width="10" height="9" viewBox="0 0 10 9"><rect x="0.5" y="0.5" width="9" height="8" fill="#fff" stroke="#999" stroke-width="0.6"/><rect x="2" y="2" width="1.2" height="6" fill="#2020e0"/><rect x="4" y="5" width="1.2" height="3" fill="#2020e0"/><rect x="6" y="6" width="1.2" height="2" fill="#2020e0"/></svg>
<div style="left:265px;top:481px;width:17.5px;height:15px;background:#cfcfcf;"></div>
<svg style="position:absolute;left:269px;top:484px" width="10" height="9" viewBox="0 0 10 9"><rect x="0.5" y="0.5" width="9" height="8" fill="#e8e8e8" stroke="#aaa" stroke-width="0.6"/><path d="M1.5 6 Q5 1 8.5 6" fill="none" stroke="#888" stroke-width="0.8"/></svg>
<div style="left:664px;top:481px;width:94px;height:15px;background:#cccccc;"></div>
<div class="t" style="left:664px;width:94px;top:482px;text-align:center;color:#c2c2c2;font-size:10px;">添加新列(A)</div>
<div style="left:763px;top:481px;width:18px;height:15px;background:#e6e6e6;border:1px solid #bcbcbc;"></div>
<svg style="position:absolute;left:767px;top:484px" width="11" height="10" viewBox="0 0 11 10"><rect x="0.5" y="0.5" width="5" height="6" fill="#fff" stroke="#333" stroke-width="0.8"/><rect x="4" y="3" width="6" height="6.5" fill="#e8e8ff" stroke="#3a3ad0" stroke-width="0.9"/></svg>
<div style="left:232px;top:503px;width:562.8px;height:1px;background:#cfcfcf;"></div>
<div style="left:598px;top:506.7px;width:59px;height:15.5px;background:#e1e1e1;border:1px solid #c3c3c3;"></div>
<div class="t" style="left:598px;width:59px;top:508px;text-align:center;font-size:9px;color:#222;">&lt;&nbsp; 上一步(B)</div>
<div style="left:663px;top:506.7px;width:55.5px;height:15.5px;background:#e1e1e1;border:1.3px solid #3b86d8;"></div>
<div class="t" style="left:663.2px;width:55px;top:508px;text-align:center;font-size:9.5px;color:#222;">完成(F)</div>
<div style="left:724px;top:506.7px;width:56px;height:15.5px;background:#e1e1e1;border:1px solid #c3c3c3;"></div>
<div class="t" style="left:724px;width:56px;top:508px;text-align:center;font-size:9.5px;color:#222;">取消</div>
</body></html>
